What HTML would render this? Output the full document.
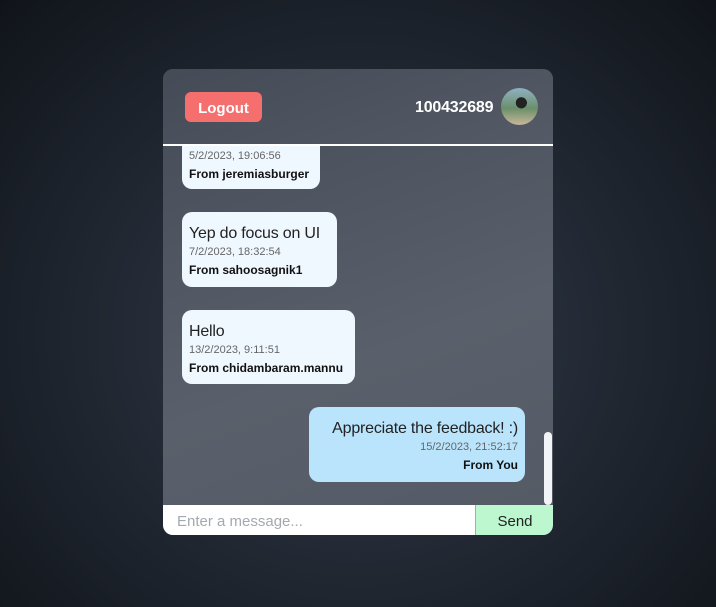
<!DOCTYPE html><html><head><style>
body{margin:0;width:716px;height:607px;background:radial-gradient(ellipse at 50% 55%,#343c49 0%,#232a35 45%,#10141a 100%);font-family:"Liberation Sans",sans-serif;position:relative;overflow:hidden}
.p{position:absolute;left:163px;top:69px;width:390px;height:466px;border-radius:10px;background:linear-gradient(160deg,#454b56 0%,#5a606b 60%,#545a65 100%);overflow:hidden}
.hdr{position:absolute;left:0;top:0;width:390px;height:75px;border-bottom:2px solid #fff}
.lo{position:absolute;left:22px;top:23px;width:77px;height:30px;background:#f56f6f;border-radius:6px;color:#fff;font-weight:bold;font-size:15px;text-align:center;line-height:33px}
.id{position:absolute;left:252px;top:30px;color:#fff;font-weight:bold;font-size:16px;letter-spacing:-0.2px}
.av{position:absolute;left:338px;top:19px;width:37px;height:37px;border-radius:50%;background:radial-gradient(circle at 55% 40%,#222 0 18%,transparent 19%),linear-gradient(180deg,#8fb2c4 0%,#6b8f6a 55%,#c9b79a 100%)}
.b{position:absolute;background:#eff7ff;border-radius:10px;color:#222;padding:0 7px}
.m{font-size:16px;margin-top:13px;letter-spacing:-0.2px}
.t{font-size:11px;color:#666;margin-top:3px}
.f{font-size:12px;font-weight:bold;color:#111;margin-top:5px}
.in{position:absolute;left:0;top:436px;width:312px;height:30px;background:#fff;color:#a4a9b0;font-size:15px;line-height:33px;padding-left:14px;box-sizing:border-box}
.sd{position:absolute;left:312px;top:436px;width:78px;height:30px;background:#bdf7cf;font-size:15px;text-align:center;line-height:33px;color:#222;border-left:1px solid #aaa}
.sb{position:absolute;left:381px;top:363px;width:8px;height:73px;background:#f2f4f7;border-radius:4px}
</style></head><body><div class="p">
<div class="b" style="left:19px;top:60px;width:124px;height:60px"><div class="t" style="margin-top:21px">5/2/2023, 19:06:56</div><div class="f">From jeremiasburger</div></div>
<div class="hdr" style="background:linear-gradient(160deg,#454b56,#555b66)"><div class="lo">Logout</div><div class="id">100432689</div><div class="av"></div></div>
<div class="b" style="left:19px;top:143px;width:141px;height:75px"><div class="m">Yep do focus on UI</div><div class="t">7/2/2023, 18:32:54</div><div class="f">From sahoosagnik1</div></div>
<div class="b" style="left:19px;top:241px;width:159px;height:74px"><div class="m">Hello</div><div class="t">13/2/2023, 9:11:51</div><div class="f">From chidambaram.mannu</div></div>
<div class="b" style="left:146px;top:338px;width:202px;height:75px;background:#b9e4fb;text-align:right"><div class="m">Appreciate the feedback! :)</div><div class="t">15/2/2023, 21:52:17</div><div class="f">From You</div></div>
<div class="sb"></div>
<div class="in">Enter a message...</div><div class="sd">Send</div>
</div></body></html>
